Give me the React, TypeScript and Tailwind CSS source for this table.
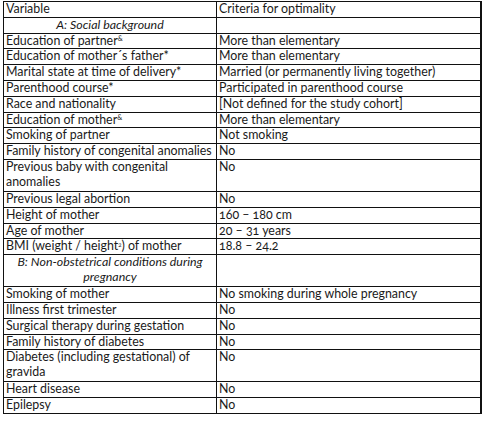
import React from "react";

type Row =
  | { kind: "row"; label: React.ReactNode; value: React.ReactNode; tall?: boolean }
  | { kind: "section"; label: React.ReactNode; tall?: boolean };

const ROWS: Row[] = [
  { kind: "section", label: "A: Social background" },
  {
    kind: "row",
    label: (
      <>
        Education of partner<sup className="text-[7px]">&amp;</sup>
      </>
    ),
    value: "More than elementary",
  },
  { kind: "row", label: "Education of mother´s father*", value: "More than elementary" },
  { kind: "row", label: "Marital state at time of delivery*", value: "Married (or permanently living together)" },
  { kind: "row", label: "Parenthood course*", value: "Participated in parenthood course" },
  { kind: "row", label: "Race and nationality", value: "[Not defined for the study cohort]" },
  {
    kind: "row",
    label: (
      <>
        Education of mother<sup className="text-[7px]">&amp;</sup>
      </>
    ),
    value: "More than elementary",
  },
  { kind: "row", label: "Smoking of partner", value: "Not smoking" },
  { kind: "row", label: "Family history of congenital anomalies", value: "No" },
  { kind: "row", label: "Previous baby with congenital anomalies", value: "No", tall: true },
  { kind: "row", label: "Previous legal abortion", value: "No" },
  { kind: "row", label: "Height of mother", value: "160 – 180 cm" },
  { kind: "row", label: "Age of mother", value: "20 – 31 years" },
  {
    kind: "row",
    label: (
      <>
        BMI (weight / height<sup className="text-[6px]">2</sup>) of mother
      </>
    ),
    value: "18.8 – 24.2",
  },
  { kind: "section", label: "B:  Non-obstetrical conditions during pregnancy", tall: true },
  { kind: "row", label: "Smoking of mother", value: "No smoking during whole pregnancy" },
  { kind: "row", label: "Illness first trimester", value: "No" },
  { kind: "row", label: "Surgical therapy during gestation", value: "No" },
  { kind: "row", label: "Family history of diabetes", value: "No" },
  { kind: "row", label: "Diabetes (including gestational) of gravida", value: "No", tall: true },
  { kind: "row", label: "Heart disease", value: "No" },
  { kind: "row", label: "Epilepsy", value: "No" },
];

const cell = "border border-[#111] px-[2px] py-0 align-top leading-[14.8px]";

export default function App() {
  return (
    <div className="h-[428px] w-[489px] bg-white pl-[3px] pt-[1px] font-['Lato',sans-serif] text-[12.4px] text-[#1a1a1a] oldstyle-nums">
      <table className="w-[479px] table-fixed border-collapse border-r-2 border-r-[#111]">
        <colgroup>
          <col className="w-[213px]" />
          <col />
        </colgroup>
        <tbody>
          <tr>
            <td className={cell}>Variable</td>
            <td className={`${cell} border-r-2`}>Criteria for optimality</td>
          </tr>
          {ROWS.map((r, i) =>
            r.kind === "section" ? (
              <tr key={i} className={r.tall ? "h-[32px]" : ""}>
                <td className={`${cell} px-[8px] text-center italic`}>{r.label}</td>
                <td className={`${cell} border-r-0 border-r-transparent`}></td>
              </tr>
            ) : (
              <tr key={i} className={r.tall ? "h-[32px]" : ""}>
                <td className={cell}>{r.label}</td>
                <td className={`${cell} border-r-2`}>{r.value}</td>
              </tr>
            )
          )}
        </tbody>
      </table>
    </div>
  );
}
